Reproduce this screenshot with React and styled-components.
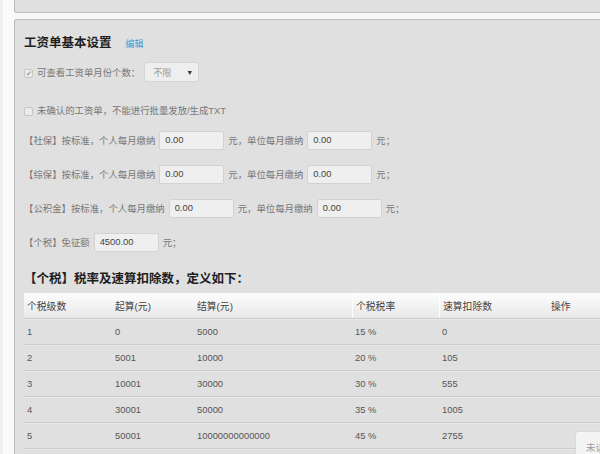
import React from "react";
import styled, { createGlobalStyle } from "styled-components";

const GlobalStyle = createGlobalStyle`
  html, body {
    margin: 0;
    padding: 0;
    background: #f8f8f8;
    overflow: hidden;
  }
  body {
    font-family: "Liberation Sans", "Noto Sans CJK SC", sans-serif;
  }
`;

const Page = styled.div`
  display: flex;
  width: 660px;
  height: 454px;
`;

const LeftStrip = styled.div`
  width: 14px;
  flex: none;
  background: #fafafa;
  border-left: 3px solid #efefef;
  box-sizing: border-box;
`;

const MainCol = styled.div`
  flex: 1;
  display: flex;
  flex-direction: column;
`;

const TopPanel = styled.div`
  height: 12px;
  flex: none;
  background: #e0e0e0;
  border-left: 1px solid #bdbdbd;
  border-bottom: 1px solid #bdbdbd;
  border-bottom-left-radius: 3px;
`;

const Panel = styled.div`
  margin-top: 6px;
  flex: 1;
  background: #e0e0e0;
  border-left: 1px solid #bdbdbd;
  border-top: 1px solid #bdbdbd;
  border-top-left-radius: 3px;
  padding: 14px 0 0 9px;
  display: flex;
  flex-direction: column;
  position: relative;
`;

const TitleRow = styled.div`
  display: flex;
  align-items: baseline;
  height: 18px;
  line-height: 18px;
  margin-top: ${(p) => p.$mt || 0}px;
`;

const Title = styled.h2`
  margin: 0;
  font-size: 12.5px;
  font-weight: bold;
  color: #1e1e1e;
`;

const EditLink = styled.a`
  margin-left: 14px;
  font-size: 9px;
  color: #3d9ad6;
  text-decoration: none;
`;

const Row = styled.div`
  display: flex;
  align-items: center;
  height: ${(p) => p.$h || 20}px;
  margin-top: ${(p) => p.$mt}px;
  font-size: 9.4px;
  color: #777;
  white-space: nowrap;
`;

const Check = styled.span`
  width: 9px;
  height: 9px;
  box-sizing: border-box;
  border: 1px solid #c6c6c6;
  border-radius: 2px;
  background: #ebebeb;
  margin: 3px 4px 0 0;
  display: flex;
  align-items: center;
  justify-content: center;
  font-size: 7px;
  color: #9a9a9a;
  line-height: 1;
`;

const Select = styled.div`
  margin-left: 4px;
  width: 55px;
  height: 20px;
  box-sizing: border-box;
  background: #eeeeee;
  border: 1px solid #d5d5d5;
  border-radius: 2px;
  display: flex;
  align-items: center;
  justify-content: space-between;
  padding: 0 5px 0 8px;
  color: #999;
  font-size: 9.2px;
`;

const Caret = styled.span`
  font-size: 7px;
  color: #333;
`;

const Input = styled.div`
  width: 65px;
  height: 19px;
  box-sizing: border-box;
  margin: 0 4px;
  background: #efefef;
  border: 1px solid #d2d2d2;
  border-radius: 2px;
  padding: 2px 0 0 5px;
  font-size: 9.4px;
  color: #444;
`;

const Table = styled.div`
  margin-top: 5px;
  width: 640px;
  font-size: 9.4px;
  color: #555;
`;

const TRow = styled.div`
  display: flex;
  height: 26px;
  align-items: center;
  box-sizing: border-box;
  border-bottom: 1px solid #cbcbcb;
  box-shadow: 0 1px 0 #e9e9e9;
  background: ${(p) => (p.$head ? "linear-gradient(#fdfdfd, #e8e8e8)" : "transparent")};
  font-size: ${(p) => (p.$head ? "9.8px" : "9.4px")};
  color: ${(p) => (p.$head ? "#444" : "#555")};
`;

const Cell = styled.div`
  width: ${(p) => p.$w}px;
  flex: none;
  height: 100%;
  display: flex;
  align-items: center;
  box-sizing: border-box;
  padding-left: 3px;
  border-left: ${(p) => (p.$div ? "1px solid rgba(255,255,255,0.9)" : "none")};
`;

const FloatButton = styled.div`
  position: absolute;
  left: 560px;
  top: 411px;
  width: 60px;
  height: 30px;
  box-sizing: border-box;
  background: #f4f4f4;
  border: 1px solid #dadada;
  border-radius: 3px;
  padding: 8px 0 0 10px;
  font-size: 9.4px;
  color: #999;
`;

const cols = [88, 82, 158, 87, 109, 120];
const head = ["个税级数", "起算(元)", "结算(元)", "个税税率", "速算扣除数", "操作"];
const rows = [
  ["1", "0", "5000", "15 %", "0"],
  ["2", "5001", "10000", "20 %", "105"],
  ["3", "10001", "30000", "30 %", "555"],
  ["4", "30001", "50000", "35 %", "1005"],
  ["5", "50001", "10000000000000", "45 %", "2755"],
];

const insurance = [
  { name: "【社保】", a: "0.00", b: "0.00", mt: 10 },
  { name: "【综保】", a: "0.00", b: "0.00", mt: 14 },
  { name: "【公积金】", a: "0.00", b: "0.00", mt: 14 },
];

export default function App() {
  return (
    <>
      <GlobalStyle />
      <Page>
        <LeftStrip />
        <MainCol>
          <TopPanel />
          <Panel>
            <TitleRow>
              <Title>工资单基本设置</Title>
              <EditLink href="#">编辑</EditLink>
            </TitleRow>
            <Row $mt={10}>
              <Check>✔</Check>
              可查看工资单月份个数：
              <Select>
                不限<Caret>▼</Caret>
              </Select>
            </Row>
            <Row $mt={18}>
              <Check />
              未确认的工资单，不能进行批量发放/生成TXT
            </Row>
            {insurance.map((r) => (
              <Row key={r.name} $mt={r.mt}>
                {r.name}按标准，个人每月缴纳
                <Input>{r.a}</Input>
                元，单位每月缴纳
                <Input>{r.b}</Input>
                元；
              </Row>
            ))}
            <Row $mt={14}>
              【个税】免征额
              <Input>4500.00</Input>
              元；
            </Row>
            <TitleRow $mt={18}>
              <Title>【个税】税率及速算扣除数，定义如下：</Title>
            </TitleRow>
            <Table>
              <TRow $head>
                {head.map((h, i) => (
                  <Cell key={h} $w={cols[i]} $div={i === 3 || i === 4}>
                    {h}
                  </Cell>
                ))}
              </TRow>
              {rows.map((r) => (
                <TRow key={r[0]}>
                  {r.map((c, i) => (
                    <Cell key={i} $w={cols[i]}>
                      {c}
                    </Cell>
                  ))}
                  <Cell $w={cols[5]} />
                </TRow>
              ))}
            </Table>
            <FloatButton>未读</FloatButton>
          </Panel>
        </MainCol>
      </Page>
    </>
  );
}
